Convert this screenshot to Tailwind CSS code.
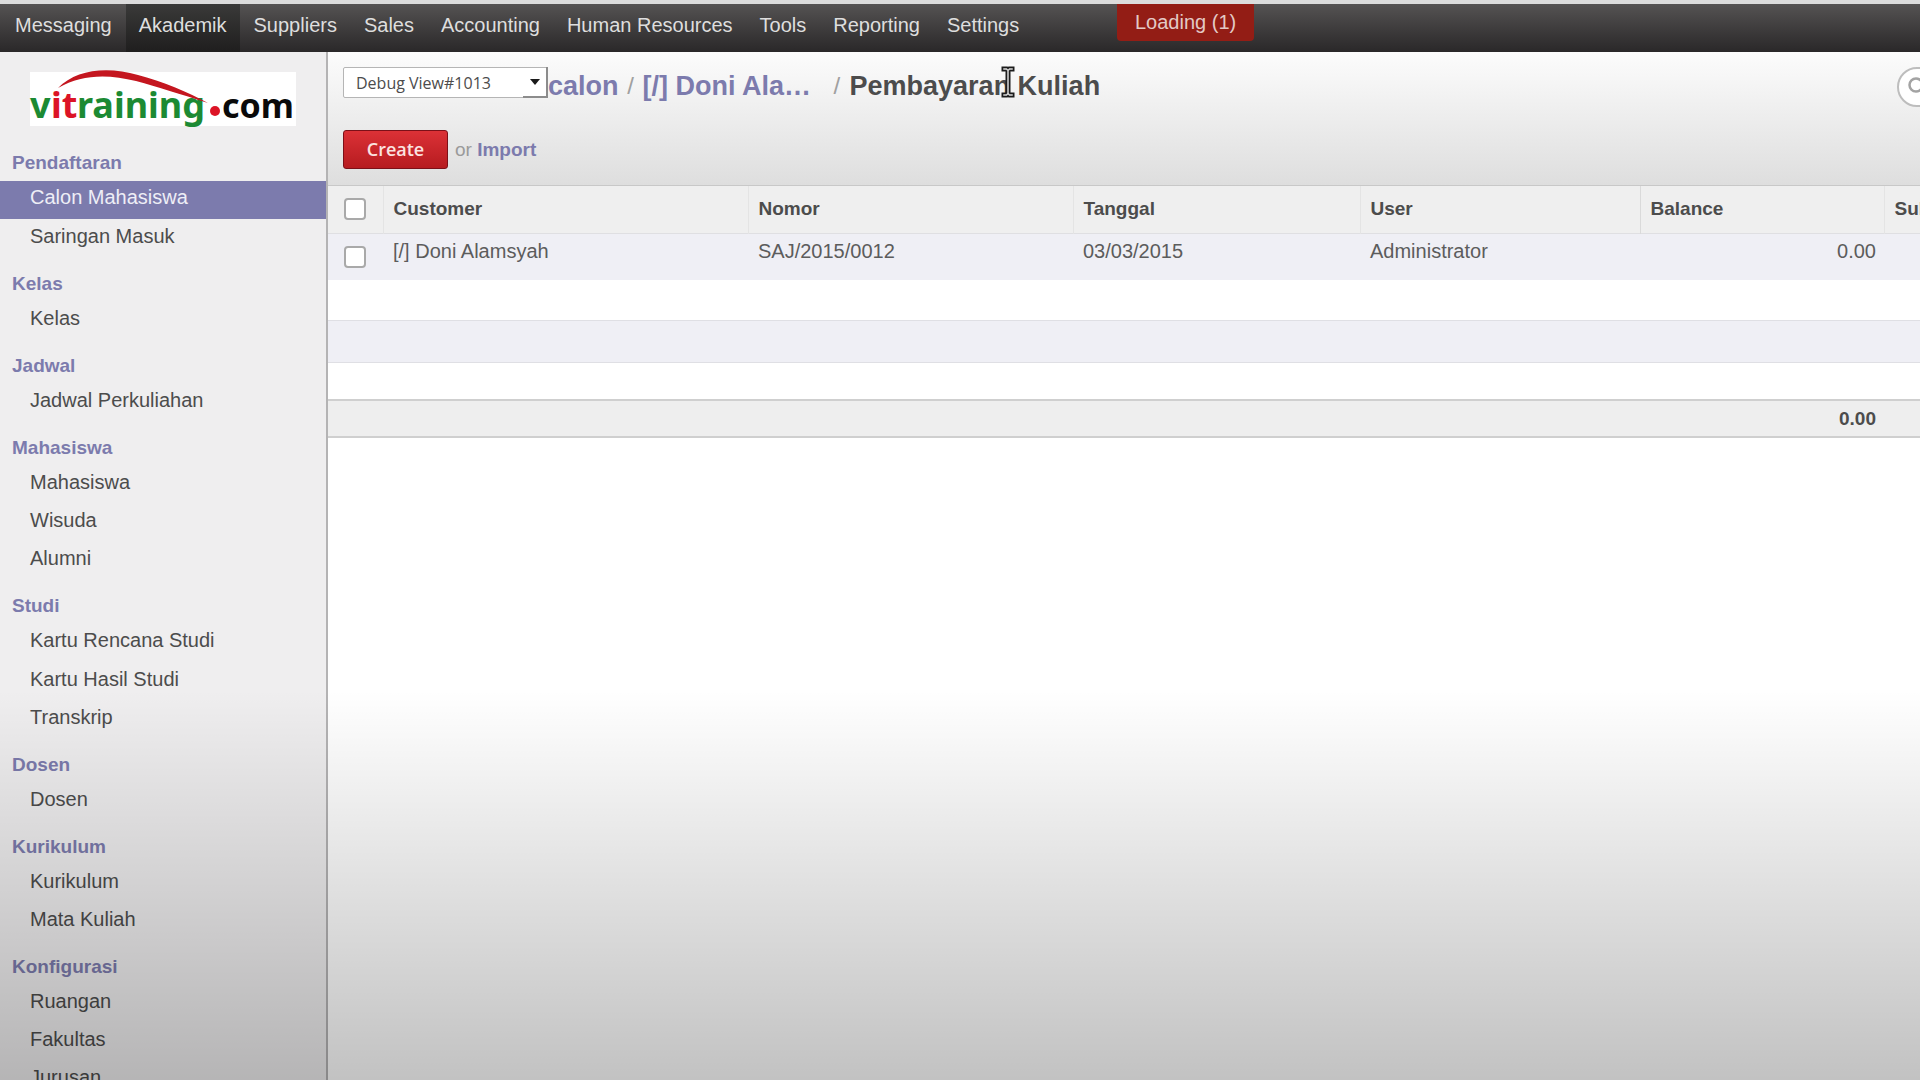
<!DOCTYPE html>
<html lang="id">
<head>
<meta charset="utf-8">
<title>Pembayaran Kuliah</title>
<script src="https://cdn.jsdelivr.net/npm/@tailwindcss/browser@4"></script>
</head>
<body class="relative flex h-screen flex-col overflow-hidden bg-white font-['Liberation_Sans',Arial,sans-serif] text-[20px] leading-6 text-[#4c4c4c]">

<!-- Top menu -->
<nav class="relative h-[52px] shrink-0 border-t-4 border-[#dcdcdc] bg-linear-to-b from-[#555353] to-[#2a2829] text-[#dedede]">
  <ul class="flex h-full gap-px pl-0.5">
    <li><a href="#" class="flex h-full items-center px-[13px] pb-1.5">Messaging</a></li>
    <li><a href="#" class="flex h-full items-center bg-linear-to-b from-[#3a3a39] to-[#1f1e1e] px-[13px] pb-1.5">Akademik</a></li>
    <li><a href="#" class="flex h-full items-center px-[13px] pb-1.5">Suppliers</a></li>
    <li><a href="#" class="flex h-full items-center px-[13px] pb-1.5">Sales</a></li>
    <li><a href="#" class="flex h-full items-center px-[13px] pb-1.5">Accounting</a></li>
    <li><a href="#" class="flex h-full items-center px-[13px] pb-1.5">Human Resources</a></li>
    <li><a href="#" class="flex h-full items-center px-[13px] pb-1.5">Tools</a></li>
    <li><a href="#" class="flex h-full items-center px-[13px] pb-1.5">Reporting</a></li>
    <li><a href="#" class="flex h-full items-center px-[13px] pb-1.5">Settings</a></li>
  </ul>
  <div role="status" class="absolute left-[1117px] top-0 h-[37px] rounded-b bg-[#931d15] px-[18px] pt-1.5 text-[#e3c9c5]">Loading (1)</div>
</nav>

<div class="flex min-h-0 flex-1">
  <!-- Sidebar -->
  <aside class="w-[328px] shrink-0 overflow-hidden border-r-2 border-[#b4b3b4] bg-[#efeeef]">
    <a href="#" class="mt-5 ml-[30px] block h-[54px] w-[266px] bg-white" aria-label="vitraining.com">
      <svg viewBox="0 0 266 54" class="block h-full w-full overflow-visible font-['Noto_Sans',sans-serif] text-[36px] font-bold">
        <text x="0" y="46" fill="#1c8a33">v</text>
        <text x="21" y="46" fill="#dc1426">it</text>
        <text x="47" y="46" fill="#1c8a33">raining</text>
        <text x="192" y="46" fill="#0a0a0a" class="text-[34px]">com</text>
        <circle cx="185" cy="39" r="5" fill="#dc1426"/>
        <path d="M28 16C46-3 78-6 108 3C134 10 158 20 178 31C150 22 128 15 106 9C78 2 52 2 28 16Z" fill="#c4161f"/>
      </svg>
    </a>
    <div class="mt-[25px]">
      <section class="mb-3.5">
        <h2 class="flex h-[30px] items-center pb-1.5 pl-3 text-[19px] font-bold text-[#7c7bad]">Pendaftaran</h2>
        <a href="#" class="flex h-[38px] items-center bg-[#7c7bad] pb-1.5 pl-[30px] text-[#eeeef6]">Calon Mahasiswa</a>
        <a href="#" class="flex h-[39px] items-center pb-1.5 pl-[30px]">Saringan Masuk</a>
      </section>
      <section class="mb-3.5">
        <h2 class="flex h-[30px] items-center pb-1.5 pl-3 text-[19px] font-bold text-[#7c7bad]">Kelas</h2>
        <a href="#" class="flex h-[38px] items-center pb-1.5 pl-[30px]">Kelas</a>
      </section>
      <section class="mb-3.5">
        <h2 class="flex h-[30px] items-center pb-1.5 pl-3 text-[19px] font-bold text-[#7c7bad]">Jadwal</h2>
        <a href="#" class="flex h-[38px] items-center pb-1.5 pl-[30px]">Jadwal Perkuliahan</a>
      </section>
      <section class="mb-3.5">
        <h2 class="flex h-[30px] items-center pb-1.5 pl-3 text-[19px] font-bold text-[#7c7bad]">Mahasiswa</h2>
        <a href="#" class="flex h-[38px] items-center pb-1.5 pl-[30px]">Mahasiswa</a>
        <a href="#" class="flex h-[38px] items-center pb-1.5 pl-[30px]">Wisuda</a>
        <a href="#" class="flex h-[38px] items-center pb-1.5 pl-[30px]">Alumni</a>
      </section>
      <section class="mb-3.5">
        <h2 class="flex h-[30px] items-center pb-1.5 pl-3 text-[19px] font-bold text-[#7c7bad]">Studi</h2>
        <a href="#" class="flex h-[38px] items-center pb-1.5 pl-[30px]">Kartu Rencana Studi</a>
        <a href="#" class="flex h-[39px] items-center pb-1.5 pl-[30px]">Kartu Hasil Studi</a>
        <a href="#" class="flex h-[38px] items-center pb-1.5 pl-[30px]">Transkrip</a>
      </section>
      <section class="mb-3.5">
        <h2 class="flex h-[30px] items-center pb-1.5 pl-3 text-[19px] font-bold text-[#7c7bad]">Dosen</h2>
        <a href="#" class="flex h-[38px] items-center pb-1.5 pl-[30px]">Dosen</a>
      </section>
      <section class="mb-3.5">
        <h2 class="flex h-[30px] items-center pb-1.5 pl-3 text-[19px] font-bold text-[#7c7bad]">Kurikulum</h2>
        <a href="#" class="flex h-[38px] items-center pb-1.5 pl-[30px]">Kurikulum</a>
        <a href="#" class="flex h-[38px] items-center pb-1.5 pl-[30px]">Mata Kuliah</a>
      </section>
      <section class="mb-3.5">
        <h2 class="flex h-[30px] items-center pb-1.5 pl-3 text-[19px] font-bold text-[#7c7bad]">Konfigurasi</h2>
        <a href="#" class="flex h-[38px] items-center pb-1.5 pl-[30px]">Ruangan</a>
        <a href="#" class="flex h-[38px] items-center pb-1.5 pl-[30px]">Fakultas</a>
        <a href="#" class="flex h-[38px] items-center pb-1.5 pl-[30px]">Jurusan</a>
      </section>
    </div>
  </aside>

  <main class="min-w-0 flex-1 overflow-hidden">
    <!-- View header -->
    <header class="h-[134px] border-b border-[#c8c8c8] bg-linear-to-b from-[#fcfcfc] to-[#dedede] pt-[15px] pl-[15px]">
      <div class="flex h-10 items-start">
        <div class="relative">
          <select aria-label="Debug view" class="block h-[31px] w-[205px] appearance-none rounded-xs border border-[#b5b5b5] bg-white pl-3 font-['Open_Sans',sans-serif] text-[16px] leading-6 text-[#4c4c4c]">
            <option>Debug View#1013</option>
          </select>
          <span class="pointer-events-none absolute top-0 right-0 flex h-[31px] w-[25px] items-center justify-center border-r-2 border-b-2 border-[#8c8c8c]">
            <svg viewBox="0 0 10 6" class="h-1.5 w-2.5" fill="#1a1a1a"><path d="M0 0H10L5 6Z"/></svg>
          </span>
        </div>
        <div class="flex h-[38px] flex-1 items-center whitespace-nowrap text-[27px] leading-8 font-bold text-[#7c7bad]">
          <a href="#">calon</a>
          <span class="w-6 text-center text-[24px] font-normal text-[#a0a0a0]">/</span>
          <a href="#" class="w-[191px]">[/] Doni Ala…</a>
          <span class="w-4 text-[24px] font-normal text-[#a0a0a0]">/</span>
          <h1 class="relative text-[#4c4c4c]">Pembayaran Kuliah
            <svg viewBox="0 0 14 32" class="absolute -top-1 left-[151px] h-8 w-3.5" fill="none" stroke-linecap="square"><path d="M3 3H5.500L7 4.500L8.500 3H11M3 29H5.500L7 27.500L8.500 29H11M7 5V27" stroke="#1c1c1c" stroke-width="5"/><path d="M3 3H5.500L7 4.500L8.500 3H11M3 29H5.500L7 27.500L8.500 29H11M7 5V27" stroke="#d8d8d8" stroke-width="1.500"/></svg>
          </h1>
        </div>
        <label class="w-[23px] shrink-0">
          <span class="flex h-10 w-[300px] items-center gap-2 rounded-full border-2 border-[#bdbdbd] bg-white pl-[9px]">
            <svg viewBox="0 0 20 20" class="h-5 w-5 shrink-0" fill="none" stroke="#a3a3a3" stroke-width="2.500"><circle cx="8" cy="8" r="6.500"/><path d="M13 13L18 18"/></svg>
            <input type="search" aria-label="Search" class="w-full outline-none">
          </span>
        </label>
      </div>
      <div class="mt-[23px] flex items-center">
        <button class="h-[39px] w-[105px] rounded-[3px] border border-[#7c1018] bg-linear-to-b from-[#dc3136] to-[#b61b20] pb-0.5 font-['Open_Sans',sans-serif] text-[18px] font-semibold text-[#fbe3e0]">Create</button>
        <span class="ml-[7px] text-[19px] text-[#9a9a9a]">or <a href="#" class="font-bold text-[#7c7bad]">Import</a></span>
      </div>
    </header>

    <!-- Records -->
    <table class="w-full table-fixed border-collapse text-left">
      <colgroup>
        <col class="w-[55px]"><col><col class="w-[325px]"><col class="w-[287px]"><col class="w-[280px]"><col class="w-[244px]"><col class="w-9">
      </colgroup>
      <thead>
        <tr class="h-[47px] border-b border-[#dfdfe2] bg-[#efefef] text-[19px]">
          <th class="border-r border-[#e4e4e4] pl-4"><input type="checkbox" aria-label="Select all" class="block h-[22px] w-[22px] appearance-none rounded border-2 border-[#a9a9a9] bg-white"></th>
          <th class="border-r border-[#e4e4e4] pl-2.5">Customer</th>
          <th class="border-r border-[#e4e4e4] pl-2.5">Nomor</th>
          <th class="border-r border-[#e4e4e4] pl-2.5">Tanggal</th>
          <th class="border-r border-[#dadada] pl-2.5">User</th>
          <th class="border-r border-[#e4e4e4] pl-2.5">Balance</th>
          <th class="overflow-hidden pl-2.5 whitespace-nowrap">Subtotal</th>
        </tr>
      </thead>
      <tbody class="text-[#5c5c5c]">
        <tr class="h-[47px] bg-[#efeff5] align-top">
          <td class="pt-3 pl-4"><input type="checkbox" aria-label="Select Doni Alamsyah" class="block h-[22px] w-[22px] appearance-none rounded border-2 border-[#a9a9a9] bg-white"></td>
          <td class="pt-[5px] pl-2.5">[/] Doni Alamsyah</td>
          <td class="pt-[5px] pl-2.5">SAJ/2015/0012</td>
          <td class="pt-[5px] pl-2.5">03/03/2015</td>
          <td class="pt-[5px] pl-2.5">Administrator</td>
          <td class="pt-[5px] pr-2 text-right">0.00</td>
          <td></td>
        </tr>
        <tr class="h-10"><td colspan="7"></td></tr>
        <tr class="h-[42px] border-y border-[#dfdfe4] bg-[#efeff5]"><td colspan="7"></td></tr>
        <tr class="h-[38px]"><td colspan="7"></td></tr>
      </tbody>
      <tfoot>
        <tr class="h-[37px] border-y-2 border-[#cfcfcf] bg-[#eeeeee] text-[19px] font-bold">
          <td colspan="5"></td>
          <td class="pr-2 text-right">0.00</td>
          <td></td>
        </tr>
      </tfoot>
    </table>
  </main>
</div>

<!-- Shade along the bottom of the window -->
<div class="pointer-events-none absolute inset-x-0 bottom-0 h-[390px] bg-linear-to-b from-black/0 to-black/24"></div>
</body>
</html>
